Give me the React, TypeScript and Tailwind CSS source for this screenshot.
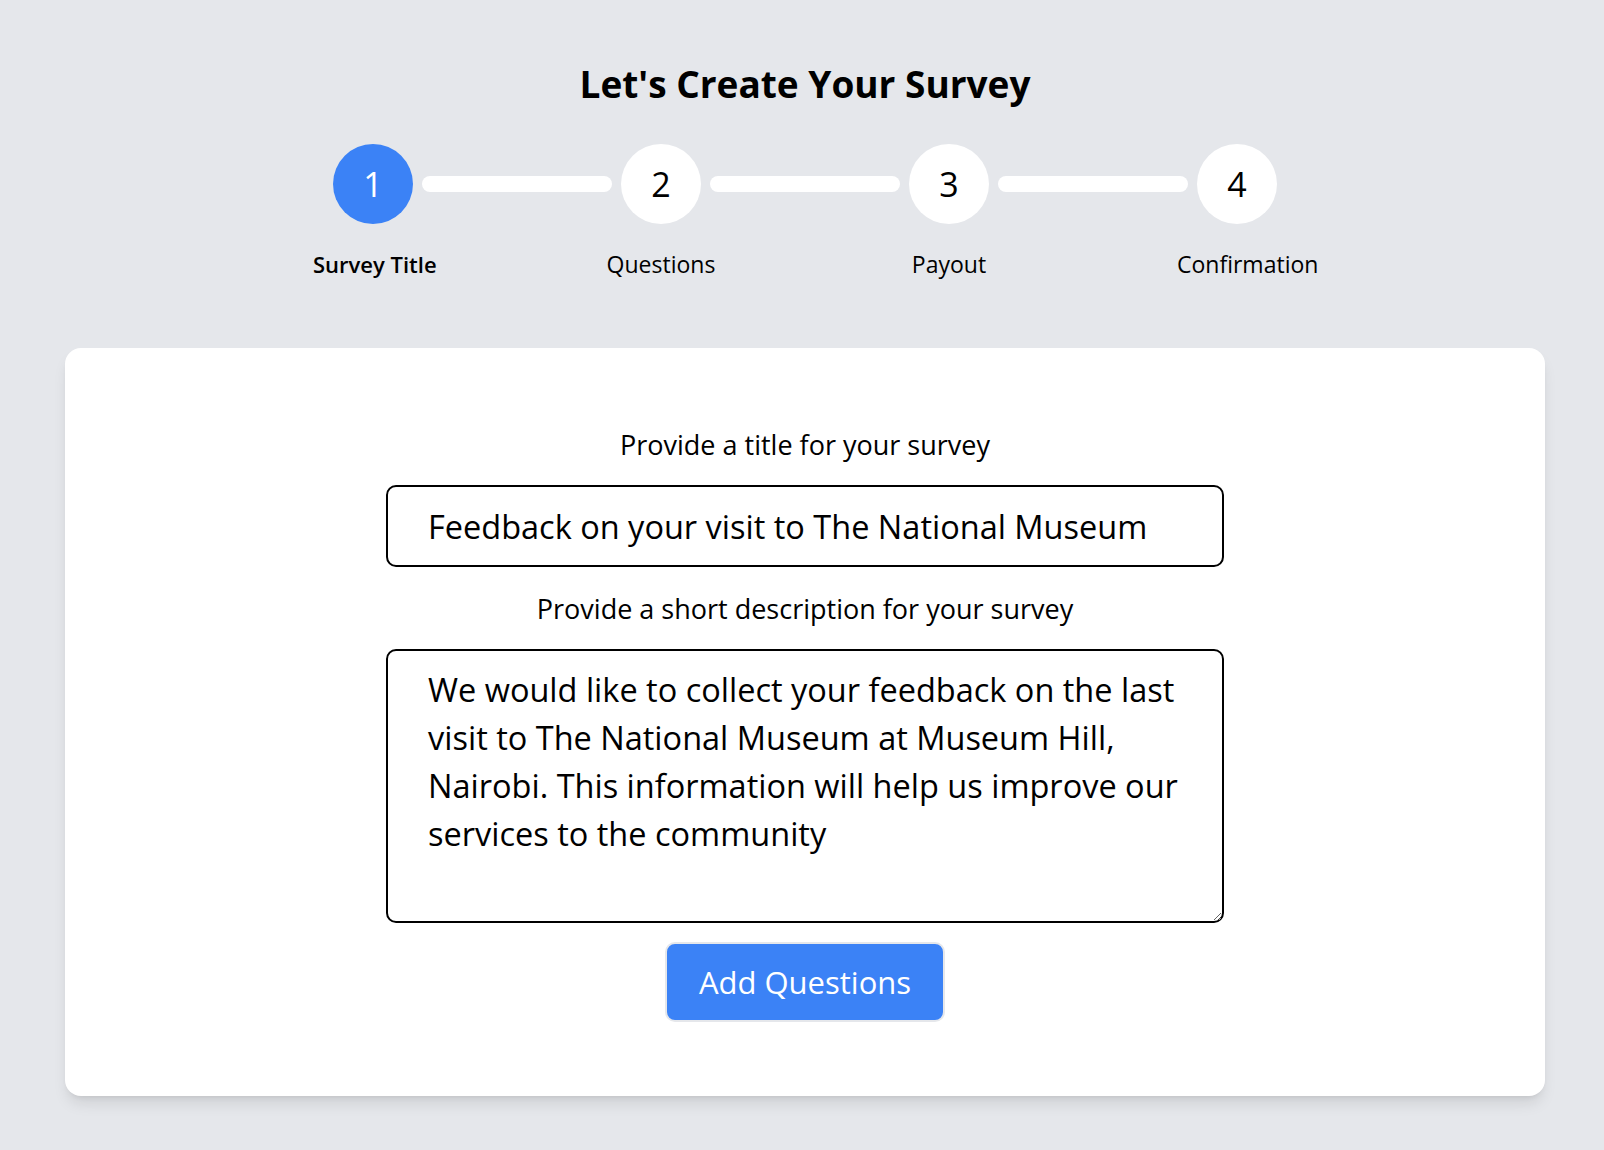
import React from "react";

const steps = ["Survey Title", "Questions", "Payout", "Confirmation"];

export default function App() {
  const font = { fontFamily: '"Open Sans", "Noto Sans", sans-serif' };
  return (
    <div className="min-h-screen bg-[#e5e7eb] pl-[6px] pb-[54px] text-black" style={font}>
      <div className="flex flex-col items-center">
        <h1 className="pt-16 text-[37px] leading-[40px] font-bold">Let's Create Your Survey</h1>

        <div className="mt-10 flex items-center">
          {steps.map((s, i) => (
            <React.Fragment key={s}>
              <div
                className={
                  i === 0
                    ? "flex h-20 w-20 items-center justify-center rounded-full bg-[#3b82f6] text-[34px] text-white"
                    : "flex h-20 w-20 items-center justify-center rounded-full bg-white text-[34px] text-black"
                }
              >
                {i + 1}
              </div>
              {i < steps.length - 1 && <div className="mx-[9px] h-4 w-[190px] rounded-full bg-white" />}
            </React.Fragment>
          ))}
        </div>

        <div className="mt-[26px] flex gap-[168px]">
          {steps.map((s, i) => (
            <div
              key={s}
              className={
                i === 0
                  ? "w-[120px] whitespace-nowrap text-center text-[22px] leading-7 font-semibold"
                  : "w-[120px] whitespace-nowrap text-center text-[23px] leading-7"
              }
            >
              {s}
            </div>
          ))}
        </div>
      </div>

      <div className="mx-[59px] mt-[70px] flex flex-col items-center rounded-2xl bg-white pt-[81px] pb-[74px] shadow-lg">
        <label className="text-[27px] leading-8">Provide a title for your survey</label>
        <input
          className="mt-6 h-[82px] w-[838px] rounded-[10px] border-2 border-black px-10 text-[32.5px] text-black outline-none"
          style={font}
          defaultValue="Feedback on your visit to The National Museum"
        />
        <label className="mt-[26px] text-[27px] leading-8">Provide a short description for your survey</label>
        <textarea
          className="mt-6 h-[274px] w-[838px] rounded-[10px] border-2 border-black px-10 pt-[15px] text-[32.5px] leading-[48px] text-black outline-none"
          style={font}
          defaultValue="We would like to collect your feedback on the last visit to The National Museum at Museum Hill, Nairobi. This information will help us improve our services to the community"
        />
        <button
          className="mt-[19px] h-20 rounded-[10px] border-2 border-gray-200 bg-[#3b82f6] px-8 text-[31px] text-white"
          style={font}
        >
          Add Questions
        </button>
      </div>
    </div>
  );
}
